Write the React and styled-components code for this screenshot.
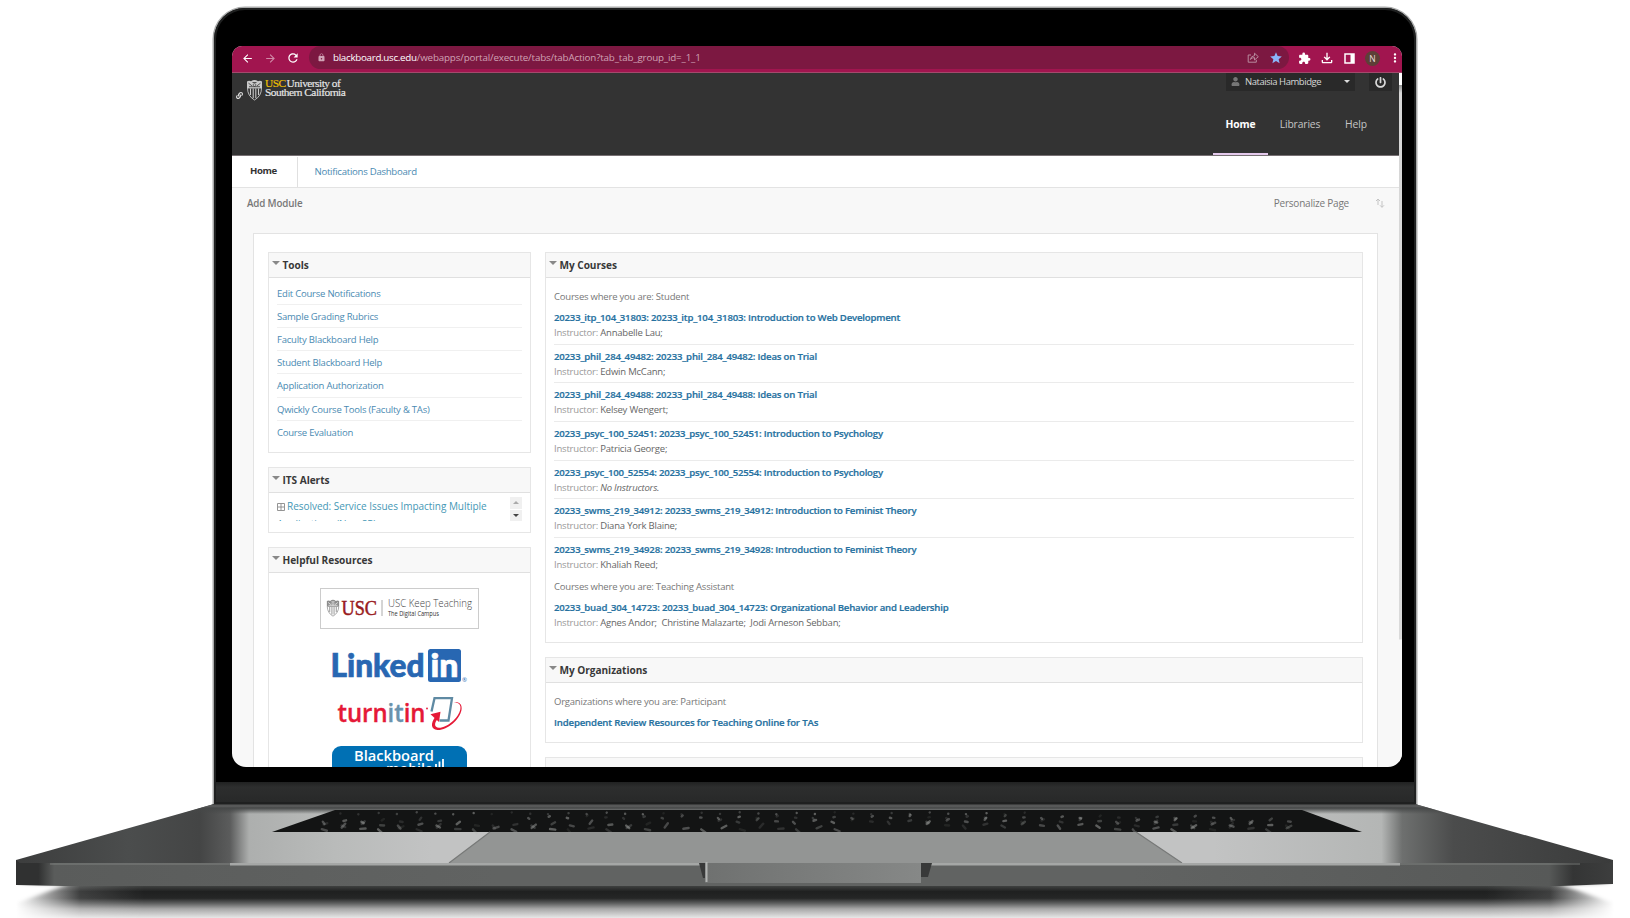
import React from "react";
import styled, { createGlobalStyle } from "styled-components";
import {
  MdArrowBack,
  MdArrowForward,
  MdRefresh,
  MdLock,
  MdStar,
  MdExtension,
  MdOutlineFileDownload,
  MdMoreVert,
} from "react-icons/md";
import { FaPowerOff, FaUser, FaLink } from "react-icons/fa";

const Global = createGlobalStyle`
  *, *::before, *::after { box-sizing: border-box; }
  html, body { margin: 0; background: #fff; }
  body { font-family: "Open Sans", "Noto Sans", sans-serif; overflow: hidden; }
`;

const Stage = styled.div`
  width: 1630px;
  height: 918px;
  overflow: hidden;
  display: flex;
  flex-direction: column;
  align-items: center;
  padding-top: 8px;
  background: #fff;
`;

const Lid = styled.div`
  width: 1202px;
  height: 796px;
  flex: none;
  display: flex;
  flex-direction: column;
  padding: 38px 14px 0 18px;
  border-radius: 31px 31px 0 0;
  background: linear-gradient(#000 0 774px, #202121 774px, #2d2e2e 779px, #272828 100%);
  box-shadow: 0 0 0 1.5px #a9aaaa, inset 0 0 0 2px #1f2020;
`;

const Screen = styled.div`
  height: 721px;
  border-radius: 10px 10px 14px 14px;
  overflow: hidden;
  background: #f8f8f8;
  display: flex;
  flex-direction: column;
`;

/* ---------- browser bar ---------- */

const BrowserBar = styled.div`
  height: 27px;
  flex: none;
  display: flex;
  background: #a1154f;
  border-bottom: 1px solid #a34a6c;
  color: #fff;
`;

const NavIcons = styled.div`
  width: 77px;
  height: 24px;
  padding-left: 9px;
  display: flex;
  align-items: center;
  gap: 9.5px;
  svg:nth-child(2) { opacity: 0.5; }
`;

const UrlPill = styled.div`
  width: 980px;
  height: 23px;
  border-radius: 12px;
  background: #7c1841;
  display: flex;
  align-items: center;
  padding: 0 6px 0 8px;
  font-size: 9.8px;
  color: #d0a3b5;
`;

const Url = styled.div`
  flex: 1;
  margin-left: 7px;
  white-space: nowrap;
  letter-spacing: -0.16px;
  b { font-weight: 500; color: #fff; letter-spacing: -0.3px; }
`;

const PillIcons = styled.div`
  display: flex;
  align-items: center;
  gap: 10px;
`;

const BarActions = styled.div`
  height: 24px;
  flex: 1;
  display: flex;
  align-items: center;
  padding-left: 8px;
`;

const ActionSlot = styled.div`
  width: ${(p) => p.$w}px;
  flex: none;
  display: flex;
  justify-content: center;
`;

const Avatar = styled.div`
  width: 15px;
  height: 15px;
  border-radius: 50%;
  background: #5d4037;
  color: #e6dcd8;
  font-size: 8.5px;
  display: flex;
  align-items: center;
  justify-content: center;
`;

/* ---------- page ---------- */

const Viewport = styled.div`
  flex: 1;
  min-height: 0;
  display: flex;
`;

const Page = styled.div`
  flex: 1;
  min-width: 0;
  height: 694px;
  overflow: hidden;
`;

const Scrollbar = styled.div`
  width: 3px;
  background: linear-gradient(#fff 0 12px, #8f9090 12px, #d6d6d6 20px, #dadada 566px, #f8f8f8 567px);
`;

const Header = styled.header`
  height: 83px;
  background: #333;
  border-bottom: 1px solid #777073;
  display: flex;
  justify-content: space-between;
`;

const Brand = styled.div`
  display: flex;
  align-items: flex-start;
  padding: 5.5px 0 0 4px;
  color: #ddd;
  .link { margin: 13px 3px 0 0; }
`;

const BrandText = styled.div`
  margin: 0 0 0 2px;
  font-family: "Liberation Serif", serif;
  font-size: 11.4px;
  line-height: 9.6px;
  letter-spacing: -0.52px;
  color: #e8e8e8;
  -webkit-text-stroke: 0.15px;
  span { color: #f0c000; margin-right: 1px; }
`;

const HeaderRight = styled.div`
  display: flex;
  flex-direction: column;
  align-items: flex-end;
`;

const UserRow = styled.div`
  display: flex;
  gap: 14px;
  padding-right: 7px;
`;

const DarkBox = styled.div`
  width: ${(p) => p.$w}px;
  height: 18px;
  background: #292929;
  display: flex;
  align-items: center;
  justify-content: ${(p) => (p.$center ? "center" : "flex-start")};
  padding: ${(p) => (p.$center ? 0 : "0 5px 1px")};
  color: #d8d8d8;
  font-size: 9.5px;
  letter-spacing: -0.47px;
  span { flex: 1; margin-left: 5px; letter-spacing: -0.45px; }
`;

const Caret = styled.i`
  width: 0;
  height: 0;
  border: ${(p) => p.$s || 4}px solid transparent;
  border-top-color: ${(p) => p.$c || "#888"};
  border-bottom: 0;
`;

const MainNav = styled.nav`
  flex: 1;
  display: flex;
  align-items: stretch;
  padding-right: 19px;
`;

const NavItem = styled.a`
  width: ${(p) => p.$w}px;
  display: flex;
  justify-content: center;
  padding-top: 26px;
  font-size: 10.3px;
  line-height: 15px;
  letter-spacing: -0.12px;
  font-weight: ${(p) => (p.$on ? 700 : 400)};
  color: ${(p) => (p.$on ? "#fff" : "#c5c5c5")};
  border-bottom: ${(p) => (p.$on ? "2px solid #e4c9ec" : "0")};
`;

const Tabs = styled.div`
  height: 32px;
  background: #fff;
  border-bottom: 1px solid #e3e3e3;
  display: flex;
  font-size: 9.6px;
`;

const Tab = styled.a`
  height: 30px;
  margin-top: 1px;
  width: ${(p) => (p.$on ? "66px" : "auto")};
  padding: ${(p) => (p.$on ? "0 0 4px 18px" : "0 16.5px 1px")};
  display: flex;
  align-items: center;
  letter-spacing: ${(p) => (p.$on ? "-0.4px" : "-0.27px")};
  font-weight: ${(p) => (p.$on ? 700 : 400)};
  color: ${(p) => (p.$on ? "#333" : "#4a8ab2")};
  border-right: ${(p) => (p.$on ? "1px solid #e0e0e0" : "0")};
`;

const ActionBar = styled.div`
  height: 45px;
  padding: 8px 14px 0 15px;
  display: flex;
  font-size: 9.8px;
  line-height: 15px;
  color: #777;
  b { font-weight: 600; flex: 1; letter-spacing: -0.15px; }
  span { margin-right: 26px; font-size: 10px; letter-spacing: -0.22px; }
  svg { margin-top: 2px; }
`;

const Canvas = styled.main`
  margin: 0 21px;
  padding: 18px 14px 0;
  height: 700px;
  background: #fff;
  border: 1px solid #e3e3e3;
  display: flex;
  gap: 14px;
`;

const Column = styled.div`
  display: flex;
  flex-direction: column;
  gap: 14.5px;
  width: ${(p) => (p.$w ? p.$w + "px" : "auto")};
  flex: ${(p) => (p.$w ? "none" : 1)};
`;

const Panel = styled.section`
  height: ${(p) => p.$h}px;
  flex: none;
  border: 1px solid #e6e6e6;
  background: #fff;
  overflow: hidden;
`;

const PanelTitle = styled.h2`
  height: 25px;
  margin: 0;
  padding: 0 3px 0 2.5px;
  background: #f8f8f8;
  border-bottom: 1px solid #e0e0e0;
  display: flex;
  align-items: center;
  gap: 3px;
  font-size: 10.1px;
  letter-spacing: -0.04px;
  font-weight: 700;
  color: #383838;
  i { margin-top: -4px; }
`;

const LinkList = styled.ul`
  list-style: none;
  margin: 0;
  padding: 4px 8px 0;
`;

const LinkItem = styled.li`
  height: 23.12px;
  border-bottom: 1px solid #f0f0f0;
  font-size: 9.5px;
  letter-spacing: -0.22px;
  line-height: 23px;
  color: #4a8ab2;
  &:last-child { border: 0; }
`;

const AlertBody = styled.div`
  height: 29px;
  display: flex;
  padding: 4px 8px 0;
`;

const AlertText = styled.div`
  flex: 1;
  height: 24px;
  overflow: hidden;
  font-size: 10px;
  letter-spacing: -0.03px;
  line-height: 18px;
  color: #4597b5;
  white-space: nowrap;
  svg { vertical-align: -1px; margin-right: 2px; }
`;

const Spinner = styled.div`
  width: 12px;
  height: 24px;
  display: flex;
  flex-direction: column;
  gap: 1px;
`;

const SpinButton = styled.div`
  flex: 1;
  background: #f0f0f0;
  display: flex;
  align-items: center;
  justify-content: center;
  i { transform: ${(p) => (p.$up ? "rotate(180deg)" : "none")}; }
`;

const Resources = styled.div`
  display: flex;
  flex-direction: column;
  align-items: center;
  padding-top: 15px;
  svg { flex: none; display: block; overflow: visible; }
`;

const KeepTeaching = styled.div`
  width: 159px;
  height: 41px;
  border: 1px solid #ccc;
  margin-bottom: 20px;
`;

const LogoSlot = styled.div`
  margin-bottom: ${(p) => p.$mb || 0}px;
`;

const CourseBody = styled.div`
  padding: 10px 8px 0;
  white-space: nowrap;
`;

const Role = styled.div`
  height: 18px;
  margin-top: ${(p) => (p.$gap ? "1.3px" : 0)};
  font-size: 9.5px;
  letter-spacing: -0.21px;
  line-height: 17px;
  color: #777;
`;

const Course = styled.div`
  height: 38.7px;
  padding-top: 4px;
  border-bottom: 1px ${(p) => (p.$last ? "solid transparent" : "solid #ebebeb")};
`;

const CourseTitle = styled.div`
  font-size: 9.6px;
  letter-spacing: ${(p) => (p.$plain ? "-0.15px" : "-0.195px")};
  line-height: 15px;
  font-weight: 600;
  color: #26719f;
  -webkit-text-stroke: 0.2px #26719f;
`;

const Instructor = styled.div`
  font-size: 9.5px;
  letter-spacing: -0.2px;
  line-height: 16px;
  color: #999;
  white-space: pre;
  span { color: #666; }
`;

/* ---------- drawings ---------- */

const Shield = ({ w, h, c, bg }) => (
  <svg width={w} height={h} viewBox="0 0 17 22" fill="none" stroke={c}>
    <path d="M1 2.5Q3 1 5 2.3Q8.5 -.5 12 2.3Q14 1 16 2.5V9H1Z" fill={c} stroke="none" />
    <path d="M1.5 9Q1.5 17 8.5 21Q15.5 17 15.5 9Z" strokeWidth=".9" />
    <path d="M4.5 9.5V16M7.2 9.5V19M9.8 9.5V19M12.5 9.5V16" strokeWidth="1.1" />
    <path d="M2.5 4.2L6 6.8M11 6.8L14.5 4.2M6.5 3.5H10.5M3 7.7H14" stroke={bg} strokeWidth=".8" />
    <circle cx="8.5" cy="6" r="1.4" stroke={bg} strokeWidth=".6" />
  </svg>
);

const ShareIcon = () => (
  <svg width="12" height="11" viewBox="0 0 12 11" fill="none" stroke="#b88a9e" strokeWidth="1">
    <path d="M4 3H1.2V10.2H9.3V7.8" />
    <path d="M3.3 7.5Q4 3.9 7.5 3.7V1.2L11.3 4.7L7.5 8V5.6Q5 5.5 3.3 7.5Z" strokeLinejoin="round" />
  </svg>
);

const SidePanelIcon = () => (
  <svg width="11" height="11" viewBox="0 0 11 11">
    <path d="M1 1H10V10H1Z" fill="none" stroke="#fff" strokeWidth="1.5" />
    <path d="M6.5 1H10V10H6.5Z" fill="#fff" />
  </svg>
);

const ReorderIcon = () => (
  <svg width="10" height="10" viewBox="0 0 10 10" fill="none" stroke="#c4c4c4" strokeWidth="1">
    <path d="M3 7V1M1 3L3 1L5 3M7 3V9.3M5 7.3L7 9.3L9 7.3" />
  </svg>
);

const PlusBox = () => (
  <svg width="8" height="8" viewBox="0 0 8 8" fill="none" stroke="#888">
    <path d="M.5 .5H7.5V7.5H.5ZM1 4H7M4 1V7" strokeWidth=".9" />
  </svg>
);

const KeepTeachingLogo = () => (
  <svg width="157" height="39" viewBox="0 0 157 39">
    <svg x="5" y="10" width="14" height="19" viewBox="0 0 14 19" overflow="visible">
      <Shield w={14} h={18} c="#8c8c8c" bg="#fff" />
    </svg>
    <text x="20.5" y="25.5" fontFamily="Liberation Serif, serif" fontSize="21" fill="#991b1e" stroke="#991b1e" strokeWidth=".5" textLength="35.5" lengthAdjust="spacingAndGlyphs">USC</text>
    <path d="M61 11V27" stroke="#aaa" />
    <text x="67" y="18" fontFamily="Open Sans, sans-serif" fontSize="10" fontWeight="300" fill="#444" textLength="84" lengthAdjust="spacingAndGlyphs">USC Keep Teaching</text>
    <text x="67" y="27.3" fontFamily="Open Sans, sans-serif" fontSize="6.2" fill="#333" textLength="51" lengthAdjust="spacingAndGlyphs">The Digital Campus</text>
  </svg>
);

const LinkedInLogo = () => (
  <svg width="136" height="33" viewBox="0 0 136 33">
    <g fontFamily="Lato, sans-serif" fontWeight="900" fontSize="33" strokeWidth=".7">
      <text x="-1.5" y="28" fill="#2867b2" stroke="#2867b2" textLength="94" lengthAdjust="spacingAndGlyphs">Linked</text>
      <rect x="96" y="0" width="33" height="33" rx="2.5" fill="#2867b2" />
      <text x="98.5" y="28" fill="#fff" stroke="#fff" textLength="28" lengthAdjust="spacingAndGlyphs">in</text>
    </g>
    <text x="130" y="33" fontFamily="Open Sans, sans-serif" fontSize="6" fill="#2867b2">®</text>
  </svg>
);

const TurnitinLogo = () => (
  <svg width="127" height="36" viewBox="0 0 127 36">
    <text x="1.5" y="26" fontFamily="Open Sans, sans-serif" fontWeight="600" fontSize="25" fill="#e51937" textLength="88" lengthAdjust="spacingAndGlyphs" stroke="#e51937" strokeWidth=".35">
      turn<tspan fill="#6a93ad" stroke="#6a93ad">it</tspan>in
    </text>
    <circle cx="91" cy="12.5" r=".9" fill="#e51937" />
    <path d="M95.5 15.5L98.5 2.2H116L112.5 24.5H103.5" fill="none" stroke="#5f8aa3" strokeWidth="2.3" />
    <path d="M117.5 6C123 5.5 126.5 8 125.5 14C123.5 24 111 34.5 101.5 34C94.5 33.5 94.5 27 99.5 20.5L102 22.5C98 27 98 31.5 103 31.8C111 32 122.5 22 124.3 13.5C125.3 8.5 122.5 6.5 117.5 6Z" fill="#e51937" />
    <path d="M94.5 18.2L104.5 15.8L103 26Z" fill="#e51937" />
  </svg>
);

const BlackboardLogo = () => (
  <svg width="136" height="44" viewBox="0 0 136 44">
    <rect width="135" height="44" rx="9" fill="#0070b4" />
    <text x="22" y="15.2" fontFamily="Open Sans, sans-serif" fontWeight="600" fontSize="14" fill="#fff" textLength="80" lengthAdjust="spacingAndGlyphs">Blackboard</text>
    <text x="54" y="27.5" fontFamily="Open Sans, sans-serif" fontWeight="600" fontSize="14" fill="#fff" textLength="47" lengthAdjust="spacingAndGlyphs">mobile</text>
    <path d="M104 18V28M107.500 15.5V28M111 13V28" stroke="#fff" strokeWidth="1.8" />
  </svg>
);

const BaseArt = styled.svg`
  flex: none;
  display: block;
`;

const keys = Array.from({ length: 190 }, (_, i) => {
  const x = 320 + ((i * 397) % 983);
  return {
    x,
    y: 8.5 + ((i * 7) % 5) * 3.8,
    w: 2.5 + ((i * 7) % 5) * 1.3,
    o: 0.1 + ((i * 11) % 9) * 0.045,
    r: ((i * 31) % 110) - 55,
  };
});

const LaptopBase = () => (
  <BaseArt width="1630" height="114" viewBox="0 0 1630 114">
    <defs>
      <linearGradient id="deck" gradientUnits="userSpaceOnUse" x1="16" y1="0" x2="1613" y2="0">
        <stop offset="0" stopColor="#3c3d3d" />
        <stop offset=".07" stopColor="#4b4d4d" />
        <stop offset=".115" stopColor="#444545" />
        <stop offset=".134" stopColor="#5b5c5c" />
        <stop offset=".146" stopColor="#adafae" />
        <stop offset=".2" stopColor="#b9bbba" />
        <stop offset=".26" stopColor="#c2c3c3" />
        <stop offset=".75" stopColor="#c2c3c3" />
        <stop offset=".855" stopColor="#b4b6b5" />
        <stop offset=".868" stopColor="#6e706f" />
        <stop offset=".9" stopColor="#4b4c4c" />
        <stop offset="1" stopColor="#3a3b3b" />
      </linearGradient>
      <linearGradient id="deckTop" x1="0" y1="0" x2="0" y2="1">
        <stop offset="0" stopColor="#303131" />
        <stop offset=".18" stopColor="#5f6060" />
        <stop offset=".4" stopColor="#464848" />
        <stop offset="1" stopColor="#464848" stopOpacity="0" />
      </linearGradient>
      <linearGradient id="front" x1="0" y1="0" x2="1" y2="0">
        <stop offset="0" stopColor="#303131" />
        <stop offset=".014" stopColor="#303131" />
        <stop offset=".024" stopColor="#5a5c5b" />
        <stop offset=".3" stopColor="#616362" />
        <stop offset=".7" stopColor="#616362" />
        <stop offset=".96" stopColor="#575958" />
        <stop offset=".975" stopColor="#343535" />
        <stop offset="1" stopColor="#3d3e3e" />
      </linearGradient>
      <linearGradient id="shadow" x1="0" y1="0" x2="0" y2="1">
        <stop offset="0" stopColor="#454746" />
        <stop offset=".2" stopColor="#1f2020" />
        <stop offset=".4" stopColor="#252626" />
        <stop offset=".55" stopColor="#5c5d5d" />
        <stop offset=".72" stopColor="#a6a6a6" />
        <stop offset="1" stopColor="#e8e8e8" />
      </linearGradient>
      <linearGradient id="fade" x1="0" y1="0" x2="1" y2="0">
        <stop offset="0" stopColor="#000" />
        <stop offset=".04" stopColor="#ddd" />
        <stop offset=".08" stopColor="#fff" />
        <stop offset=".92" stopColor="#fff" />
        <stop offset=".96" stopColor="#ddd" />
        <stop offset="1" stopColor="#000" />
      </linearGradient>
      <linearGradient id="notch" x1="0" y1="0" x2="1" y2="0">
        <stop offset="0" stopColor="#6f7170" />
        <stop offset="1" stopColor="#868887" />
      </linearGradient>
      <filter id="soft" x="-10%" y="-100%" width="120%" height="300%">
        <feGaussianBlur stdDeviation="4 1.5" />
      </filter>
      <mask id="ends">
        <rect x="16" y="76" width="1598" height="40" fill="url(#fade)" />
      </mask>
    </defs>
    <g mask="url(#ends)">
      <path d="M16 81H1614V114H16Z" fill="url(#shadow)" />
    </g>
    <path d="M0 81H66L52 86L20 98H0Z M1630 81H1560L1576 86L1610 98H1630Z" fill="#fff" filter="url(#soft)" />
    <path d="M214 0H1415L1613 56V60H16V56Z" fill="url(#deck)" />
    <path d="M214 0H1415L1450 10H180Z" fill="url(#deckTop)" />
    <path d="M335 6H1302L1362 28H272Z" fill="#131414" />
    <g fill="#b4b6b5">
      {keys.map((k, i) => (
        <rect key={i} x={k.x} y={k.y} width={k.w} height="2.4" rx="1.2" opacity={k.o} transform={`rotate(${k.r} ${k.x} ${k.y})`} />
      ))}
    </g>
    <path d="M490 28H1136L1182 59H449Z" fill="#939594" />
    <path d="M490 28L449 59M1136 28L1182 59" stroke="#777978" strokeWidth="1.2" />
    <path d="M16 56L20 59H1609L1613 56V80L1560 82H64L16 81Z" fill="url(#front)" />
    <path d="M50 59H1580V61H50Z" fill="#8c8e8d" opacity=".35" />
    <path d="M230 59H1400V61.5H230Z" fill="#a5a7a6" />
    <path d="M699 59H705V74H703Z M921 59H932L928 73H921Z" fill="#383939" />
    <rect x="705" y="59" width="216" height="20" fill="url(#notch)" />
    <path d="M706.5 58V78" stroke="#b2b4b3" strokeWidth="2" />
  </BaseArt>
);

/* ---------- content ---------- */

const tools = [
  "Edit Course Notifications",
  "Sample Grading Rubrics",
  "Faculty Blackboard Help",
  "Student Blackboard Help",
  "Application Authorization",
  "Qwickly Course Tools (Faculty & TAs)",
  "Course Evaluation",
];

const student = [
  ["20233_itp_104_31803: 20233_itp_104_31803: Introduction to Web Development", "Annabelle Lau;"],
  ["20233_phil_284_49482: 20233_phil_284_49482: Ideas on Trial", "Edwin McCann;"],
  ["20233_phil_284_49488: 20233_phil_284_49488: Ideas on Trial", "Kelsey Wengert;"],
  ["20233_psyc_100_52451: 20233_psyc_100_52451: Introduction to Psychology", "Patricia George;"],
  ["20233_psyc_100_52554: 20233_psyc_100_52554: Introduction to Psychology", null],
  ["20233_swms_219_34912: 20233_swms_219_34912: Introduction to Feminist Theory", "Diana York Blaine;"],
  ["20233_swms_219_34928: 20233_swms_219_34928: Introduction to Feminist Theory", "Khaliah Reed;"],
];

const Title = ({ children }) => (
  <PanelTitle>
    <Caret $s={4.5} />
    <span>{children}</span>
  </PanelTitle>
);

const CourseRow = ({ title, who, last }) => (
  <Course $last={last}>
    <CourseTitle>{title}</CourseTitle>
    <Instructor>
      Instructor: <span>{who || <em>No Instructors.</em>}</span>
    </Instructor>
  </Course>
);

export default function App() {
  return (
    <>
      <Global />
      <Stage>
        <Lid>
          <Screen>
            <BrowserBar>
              <NavIcons>
                <MdArrowBack size={13} />
                <MdArrowForward size={13} />
                <MdRefresh size={14} />
              </NavIcons>
              <UrlPill>
                <MdLock size={9} />
                <Url>
                  <b>blackboard.usc.edu</b>/webapps/portal/execute/tabs/tabAction?tab_tab_group_id=_1_1
                </Url>
                <PillIcons>
                  <ShareIcon />
                  <MdStar size={14} color="#8ab4f8" />
                </PillIcons>
              </UrlPill>
              <BarActions>
                <ActionSlot $w={14}><MdExtension size={13} /></ActionSlot>
                <ActionSlot $w={31}><MdOutlineFileDownload size={16} /></ActionSlot>
                <ActionSlot $w={15}><SidePanelIcon /></ActionSlot>
                <ActionSlot $w={31}><Avatar>N</Avatar></ActionSlot>
                <ActionSlot $w={14}><MdMoreVert size={14} /></ActionSlot>
              </BarActions>
            </BrowserBar>
            <Viewport>
              <Page>
                <Header>
                  <Brand>
                    <FaLink className="link" size={7} />
                    <Shield w={17} h={22} c="#c9c9c9" bg="#333" />
                    <BrandText>
                      <span>USC</span>University of
                      <br />
                      Southern California
                    </BrandText>
                  </Brand>
                  <HeaderRight>
                    <UserRow>
                      <DarkBox $w={129}>
                        <FaUser size={9} color="#777" />
                        <span>Nataisia Hambidge</span>
                        <Caret $s={3.5} $c="#ddd" />
                      </DarkBox>
                      <DarkBox $w={23} $center>
                        <FaPowerOff size={11} />
                      </DarkBox>
                    </UserRow>
                    <MainNav>
                      <NavItem $w={55} $on>Home</NavItem>
                      <NavItem $w={64}>Libraries</NavItem>
                      <NavItem $w={48}>Help</NavItem>
                    </MainNav>
                  </HeaderRight>
                </Header>
                <Tabs>
                  <Tab $on>Home</Tab>
                  <Tab>Notifications Dashboard</Tab>
                </Tabs>
                <ActionBar>
                  <b>Add Module</b>
                  <span>Personalize Page</span>
                  <ReorderIcon />
                </ActionBar>
                <Canvas>
                  <Column $w={263}>
                    <Panel $h={200.5}>
                      <Title>Tools</Title>
                      <LinkList>
                        {tools.map((t) => (
                          <LinkItem key={t}>{t}</LinkItem>
                        ))}
                      </LinkList>
                    </Panel>
                    <Panel $h={65.5}>
                      <Title>ITS Alerts</Title>
                      <AlertBody>
                        <AlertText>
                          <PlusBox />
                          Resolved: Service Issues Impacting Multiple
                          <br />
                          Applications (Non-SP)
                        </AlertText>
                        <Spinner>
                          <SpinButton $up><Caret $s={3} $c="#aaa" /></SpinButton>
                          <SpinButton><Caret $s={3} $c="#444" /></SpinButton>
                        </Spinner>
                      </AlertBody>
                    </Panel>
                    <Panel $h={260}>
                      <Title>Helpful Resources</Title>
                      <Resources>
                        <KeepTeaching>
                          <KeepTeachingLogo />
                        </KeepTeaching>
                        <LogoSlot $mb={14}><LinkedInLogo /></LogoSlot>
                        <LogoSlot $mb={14}><TurnitinLogo /></LogoSlot>
                        <LogoSlot><BlackboardLogo /></LogoSlot>
                      </Resources>
                    </Panel>
                  </Column>
                  <Column>
                    <Panel $h={390.5}>
                      <Title>My Courses</Title>
                      <CourseBody>
                        <Role>Courses where you are: Student</Role>
                        {student.map(([t, w], i) => (
                          <CourseRow key={t} title={t} who={w} last={i === 6} />
                        ))}
                        <Role $gap>Courses where you are: Teaching Assistant</Role>
                        <CourseRow
                          last
                          title="20233_buad_304_14723: 20233_buad_304_14723: Organizational Behavior and Leadership"
                          who="Agnes Andor;  Christine Malazarte;  Jodi Arneson Sebban;"
                        />
                      </CourseBody>
                    </Panel>
                    <Panel $h={85.5}>
                      <Title>My Organizations</Title>
                      <CourseBody>
                        <Role>Organizations where you are: Participant</Role>
                        <Course $last>
                          <CourseTitle $plain>Independent Review Resources for Teaching Online for TAs</CourseTitle>
                        </Course>
                      </CourseBody>
                    </Panel>
                    <Panel $h={60}>
                      <PanelTitle />
                    </Panel>
                  </Column>
                </Canvas>
              </Page>
              <Scrollbar />
            </Viewport>
          </Screen>
        </Lid>
        <LaptopBase />
      </Stage>
    </>
  );
}
